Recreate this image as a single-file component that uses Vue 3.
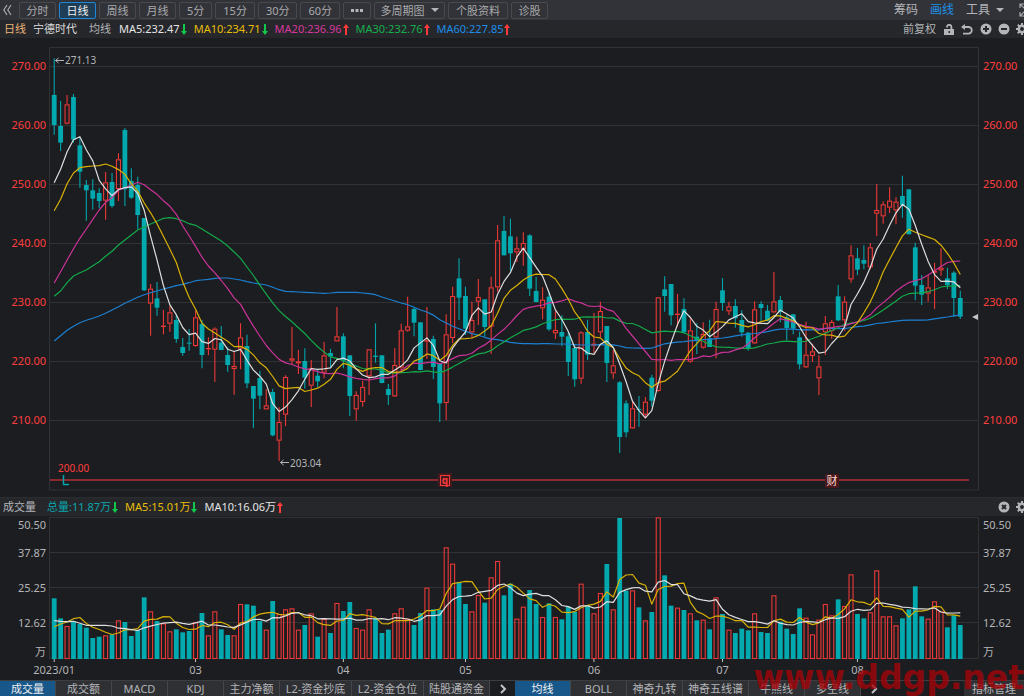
<script setup>
const periods = [
  { t: '分时' }, { t: '日线', on: true }, { t: '周线' }, { t: '月线' },
  { t: '5分', fit: true }, { t: '15分', fit: true }, { t: '30分', fit: true }, { t: '60分', fit: true },
]
const averages = [
  { t: 'MA5:232.47', c: 'white', up: false },
  { t: 'MA10:234.71', c: 'yellow', up: false },
  { t: 'MA20:236.96', c: 'magenta', up: true },
  { t: 'MA30:232.76', c: 'green', up: true },
  { t: 'MA60:227.85', c: 'blue', up: true },
]
const volumeStats = [
  { t: '总量:11.87万', c: 'teal', up: false },
  { t: 'MA5:15.01万', c: 'yellow', up: false },
  { t: 'MA10:16.06万', c: 'white', up: true },
]
const leftTabs = [
  { t: '成交量', on: true }, { t: '成交额' }, { t: 'MACD' }, { t: 'KDJ' }, { t: '主力净额' },
  { t: 'L2-资金抄底', w: 'wide' }, { t: 'L2-资金仓位', w: 'wide' }, { t: '陆股通资金', w: 'mid' },
]
const rightTabs = [
  { t: '均线', on: true }, { t: 'BOLL' }, { t: '神奇九转' }, { t: '神奇五线谱', w: 'mid' }, { t: '牛熊线' }, { t: '多空线' },
]

// Candles: direction, high, body top, body bottom, low, in thirds of a unit below each base line.
const U = 1
const D = 0
const segments = [
  { base: 135, rows: [
    [D, 40, 150, 240, 269], [D, 168, 243, 293, 318], [U, 150, 178, 236, 238], [D, 147, 156, 284, 293],
    [D, 280, 301, 380, 428], [D, 405, 420, 436, 527], [D, 403, 436, 461, 494], [D, 430, 444, 468, 490],
    [U, 381, 412, 467, 524], [D, 384, 411, 483, 488], [U, 325, 343, 432, 468], [D, 249, 255, 433, 483],
    [D, 370, 408, 458, 462], [D, 395, 420, 510, 553], [D, 519, 519, 736, 738],
  ] },
  { base: 780, rows: [
    [U, 72, 86, 131, 227], [D, 66, 115, 143, 167], [U, 150, 197, 200, 223], [U, 138, 157, 191, 215],
    [D, 165, 180, 237, 248], [D, 234, 261, 279, 287], [D, 207, 248, 251, 272], [U, 152, 172, 258, 260],
    [D, 180, 192, 285, 325], [U, 232, 264, 267, 286], [U, 202, 206, 269, 366], [D, 198, 248, 270, 270],
    [D, 262, 285, 315, 336], [U, 272, 318, 327, 404], [U, 190, 232, 266, 328], [D, 224, 258, 370, 385],
    [D, 378, 378, 416, 504], [D, 332, 354, 407, 448], [U, 388, 436, 448, 448], [D, 386, 396, 526, 529],
    [U, 442, 486, 542, 603], [U, 346, 351, 464, 498], [U, 201, 295, 302, 313], [U, 270, 304, 310, 342],
    [D, 265, 303, 353, 386], [U, 300, 325, 377, 441], [D, 327, 347, 364, 382], [U, 246, 286, 338, 355],
    [D, 267, 279, 290, 322], [U, 141, 229, 244, 244], [D, 220, 229, 302, 325], [D, 286, 286, 408, 468],
    [U, 394, 405, 448, 482], [U, 362, 381, 426, 440], [U, 268, 268, 349, 405], [D, 190, 287, 291, 308],
    [D, 286, 286, 369, 370], [D, 372, 387, 405, 435], [U, 265, 315, 409, 411], [U, 191, 211, 323, 331],
    [U, 110, 199, 212, 215], [D, 141, 147, 188, 229], [D, 187, 187, 330, 331], [U, 141, 241, 244, 297],
    [D, 227, 237, 321, 357], [D, 309, 309, 430, 486], [U, 163, 223, 429, 480], [U, 80, 108, 234, 250],
    [D, -5, 55, 113, 180],
  ] },
  { base: 600, rows: [
    [D, 260, 288, 386, 405], [U, 305, 360, 397, 415], [U, 237, 291, 305, 375], [D, 298, 298, 381, 410],
    [U, 230, 262, 380, 462], [U, 75, 121, 262, 275], [D, 47, 93, 166, 166], [D, 56, 109, 160, 212],
    [U, 110, 145, 157, 186], [U, 97, 129, 148, 197], [D, 103, 106, 266, 288], [D, 230, 273, 306, 306],
    [U, 262, 299, 325, 358], [D, 275, 290, 388, 392], [U, 334, 390, 400, 417], [D, 346, 396, 410, 439],
    [D, 395, 409, 486, 528], [D, 432, 444, 538, 560], [U, 394, 397, 536, 551], [D, 359, 396, 464, 480],
    [U, 339, 431, 437, 459], [U, 305, 333, 397, 412], [D, 378, 378, 489, 546], [U, 450, 496, 520, 536],
    [D, 543, 547, 711, 759], [D, 601, 610, 697, 712], [U, 605, 625, 685, 686], [D, 588, 627, 630, 680],
    [U, 591, 605, 644, 655], [D, 524, 533, 602, 620], [U, 292, 292, 573, 575], [D, 229, 268, 288, 335],
    [D, 252, 252, 346, 376], [U, 282, 341, 344, 380], [D, 295, 327, 397, 400], [U, 355, 391, 485, 488],
    [D, 370, 410, 420, 462], [U, 367, 402, 443, 446],
  ] },
  { base: 495, rows: [
    [D, 464, 520, 546, 546], [U, 410, 432, 517, 580], [D, 339, 376, 414, 437], [U, 410, 424, 439, 450],
    [D, 403, 423, 460, 488], [D, 436, 465, 502, 515], [D, 501, 503, 550, 557], [U, 409, 433, 535, 537],
    [D, 409, 417, 429, 467], [D, 420, 437, 467, 469], [U, 321, 409, 442, 445], [D, 393, 405, 440, 472],
    [D, 451, 457, 489, 525], [D, 447, 448, 491, 508], [D, 500, 517, 598, 613], [U, 470, 569, 607, 609],
    [U, 536, 559, 573, 591], [U, 571, 604, 640, 690], [U, 453, 475, 502, 570], [U, 465, 471, 498, 522],
    [D, 360, 394, 466, 468], [U, 394, 410, 466, 497], [U, 241, 271, 343, 353], [D, 249, 280, 314, 330],
    [D, 241, 285, 296, 313], [U, 234, 247, 307, 313], [U, 57, 135, 146, 214], [U, 109, 118, 154, 176],
    [U, 67, 107, 128, 144], [U, 97, 110, 136, 178], [D, 32, 93, 120, 158], [D, 72, 73, 208, 208],
    [D, 233, 247, 362, 406], [D, 330, 360, 389, 420], [U, 330, 367, 386, 410], [U, 293, 318, 323, 432],
    [U, 250, 308, 316, 332], [D, 308, 340, 360, 372], [D, 319, 323, 399, 455], [D, 377, 399, 455, 462],
  ] },
]
const volumeTops = [
  310, 370, 393, 378, 387, 398, 429, 425, 421, 419, 376, 381, 423, 405, 307, 349, 378, 385, 409, 403,
  412, 408, 381, 354, 421, 349, 403, 420, 421, 327, 328, 332, 378, 404, 318, 357, 343, 340, 404, 390,
  355, 425, 372, 414, 324, 348, 321, 399, 404, 343, 369, 414, 404, 355, 340, 371, 390, 354, 278, 343,
  345, 157, 206, 261, 327, 349, 300, 323, 247, 198, 301, 266, 371, 335, 285, 327, 366, 325, 366, 373,
  335, 350, 266, 331, 355, 294, 207, 343, 69, 287, 286, 337, 376, 351, 67, 241, 332, 338, 345, 355,
  376, 374, 403, 307, 357, 404, 414, 401, 406, 355, 411, 414, 301, 380, 401, 417, 340, 368, 418, 374,
  327, 361, 313, 333, 238, 357, 370, 352, 226, 364, 364, 391, 370, 343, 274, 364, 371, 319, 349, 397,
  361, 390,
]

const xOf = (i) => 54.2 + i * 6.426
const candles = segments
  .flatMap((s) => s.rows.map((r) => [r[0], ...r.slice(1).map((v) => (s.base + v) / 3)]))
  .map(([up, high, top, bottom, low], i) => ({ up, high, top, bottom, low, x: xOf(i), close: up ? top : bottom }))
const closes = candles.map((c) => c.close)
const volumes = volumeTops.map((v) => 495 + v / 3)

// The first points of each average come from days before the window, so they are given.
function averageLine(values, n, lead) {
  return values
    .map((_, i) => {
      const y = i < lead.length ? lead[i] : values.slice(i - n + 1, i + 1).reduce((a, b) => a + b, 0) / n
      return `${xOf(i).toFixed(1)},${y.toFixed(1)}`
    })
    .join(' ')
}
const priceLines = [
  { c: 'l-blue', p: averageLine(closes, 60, [
    341, 335.7, 330.3, 326.3, 322.7, 320.3, 318.3, 316, 313.3, 310, 306.7, 303.3, 300.3, 297.3, 294.7, 292.7, 291, 289, 287.3, 285.7,
    284.3, 282.7, 280.7, 280, 279.3, 278.3, 278, 278, 279, 280, 281.7, 283, 284, 285, 287.3, 289.7, 291.3, 291.7, 292, 292.3,
    292.7, 293, 293.3, 293, 292.3, 292.3, 292.3, 292.3, 293, 293.7, 294.7, 297, 299, 301, 303, 304.7, 307.3, 310, 312]) },
  { c: 'l-green', p: averageLine(closes, 30, [
    296.3, 291, 282.7, 276, 272.7, 270, 265.7, 261.7, 256.3, 251.3, 245, 240, 235, 230, 227, 224, 221.3, 218.3, 217.7, 218.7,
    220.7, 223.7, 225.3, 229, 233, 237, 241, 246, 252]) },
  { c: 'l-magenta', p: averageLine(closes, 20, [
    283, 271.7, 260, 248.7, 238.3, 229, 219.3, 210, 202.3, 197.7, 190.3, 188, 185, 182.3, 184.7, 189.7, 194.3, 200.7, 206.3]) },
  { c: 'l-yellow', p: averageLine(closes, 10, [210.7, 199.3, 183.7, 173, 167.7, 166.7, 166, 165.7, 164]) },
  { c: 'l-white', p: averageLine(closes, 5, [182.7, 169.3, 151.7, 139.7]) },
]
const volumeLines = [
  { c: 'l-yellow', p: averageLine(volumes, 5, [626.7, 624, 622, 618.7]) },
  { c: 'l-white', p: averageLine(volumes, 10, [620.7, 621.3, 621.7, 621.3, 623.3, 625.3, 625.3, 625.3, 625.3]) },
]

const priceGrid = [
  ['270.00', 66], ['260.00', 125], ['250.00', 184], ['240.00', 243], ['230.00', 302], ['220.00', 361], ['210.00', 420],
]
const volumeLabels = [['50.50', 525], ['37.87', 553], ['25.25', 588], ['12.62', 623], ['万', 652]]
const dates = [['2023/01', 0], ['03', 22], ['04', 45], ['05', 64], ['06', 84], ['07', 104], ['08', 125]]
</script>

<template>
  <main class="app">
    <nav class="toolbar">
      <button class="icon collapse" aria-label="收起">
        <svg width="10" height="12" viewBox="0 0 10 12"><path d="M4 1 .8 6 4 11M8 1 4.800 6 8 11" /></svg>
      </button>
      <button v-for="p in periods" :key="p.t" class="period" :class="{ on: p.on, fit: p.fit }">{{ p.t }}</button>
      <button class="period dots" aria-label="更多">
        <svg width="12" height="3" viewBox="0 0 12 3"><path d="M0 0h3v3H0zM4.500 0h3v3h-3zM9 0h3v3H9z" /></svg>
      </button>
      <button class="period menu" aria-haspopup="true">多周期图<i class="caret"></i></button>
      <button class="period fit">个股资料</button>
      <button class="period">诊股</button>
      <div class="tools">
        <button>筹码</button>
        <button class="active">画线</button>
        <button aria-haspopup="true">工具<i class="caret"></i></button>
        <button class="icon" aria-label="全屏">
          <svg width="5" height="14" viewBox="0 0 5 14"><path d="M1 5V1h4M1 1l5 5M1 9v4h4M1 13l5-5" /></svg>
        </button>
      </div>
    </nav>

    <header class="info">
      <span class="orange">日线</span>
      <span class="name">宁德时代</span>
      <span class="ma-label">均线</span>
      <span v-for="m in averages" :key="m.t" class="stat" :class="m.c">{{ m.t }}<svg class="arrow" :class="m.up ? 'up' : 'down'" width="6" height="11" viewBox="0 0 6 11"><path d="M3 0 6 4H4v7H2V4H0z" /></svg></span>
      <div class="actions">
        <button class="adjust">前复权</button>
        <button class="icon" aria-label="锁定">
          <svg width="11" height="11" viewBox="0 0 11 11"><path class="ln" d="M3 3.500V3a2.200 2.200 0 0 1 4.400 0v2" /><path class="fl" d="M0 5h10v6H0z" /><path class="hole" d="M4.500 7h1.500v2H4.500z" /></svg>
        </button>
        <button class="icon" aria-label="撤销">
          <svg width="13" height="11" viewBox="0 0 13 11"><path class="ln" d="M3 3h4.500a3.300 3.300 0 0 1 0 6.600H2" /><path class="fl" d="M0 3 4 0v6z" /></svg>
        </button>
        <button class="icon" aria-label="放大">
          <svg width="12" height="12" viewBox="0 0 12 12"><circle class="fl" cx="6" cy="6" r="5.500" /><path class="cut" d="M6 3v6M3 6h6" /></svg>
        </button>
        <button class="icon" aria-label="缩小">
          <svg width="12" height="12" viewBox="0 0 12 12"><circle class="fl" cx="6" cy="6" r="5.500" /><path class="cut" d="M3 6h6" /></svg>
        </button>
        <button class="icon" aria-label="设置">
          <svg width="8" height="12" viewBox="0 0 8 12"><circle class="gear" cx="6" cy="6" r="3.200" /><path class="teeth" d="M6 0v2.500M6 9.500V12M0 6h2.500M1.800 1.800l1.800 1.800M1.800 10.200l1.800-1.800" /></svg>
        </button>
      </div>
    </header>

    <svg class="chart" viewBox="0 38 1024 459" role="img" aria-label="宁德时代日线">
      <path class="frame" d="M978.500 47.500H49.500V490M49.500 490H978.500M978.500 47.500V490" />
      <g v-for="[label, y] in priceGrid" :key="label">
        <path class="grid" :d="`M50 ${y + 0.5}H978`" />
        <text class="price" x="46" :y="y + 4" text-anchor="end">{{ label }}</text>
        <text class="price" x="983" :y="y + 4">{{ label }}</text>
      </g>
      <path class="base" d="M50 480H969" />
      <g v-for="(c, i) in candles" :key="i" :class="c.up ? 'rise' : 'fall'">
        <template v-if="c.up">
          <path :d="`M${c.x} ${c.high}V${c.top}M${c.x} ${c.bottom}V${c.low}`" />
          <rect :x="c.x - 2" :y="c.top + 0.5" width="4" :height="Math.max(c.bottom - c.top - 1, 0.3)" />
        </template>
        <template v-else>
          <path :d="`M${c.x} ${c.high}V${c.low}`" />
          <rect :x="c.x - 2.4" :y="c.top" width="4.8" :height="c.bottom - c.top" />
        </template>
      </g>
      <polyline v-for="l in priceLines" :key="l.c" :class="l.c" :points="l.p" />
      <path class="pointer" d="M55.500 60.500H64M58.500 58 55.500 60.500 58.500 63M280.500 462.500H289M283.500 460 280.500 462.500 283.500 465" />
      <text class="note" x="65" y="64">271.13</text>
      <text class="note" x="290" y="467">203.04</text>
      <text class="note low" x="58" y="472">200.00</text>
      <path class="mark" d="M63.500 475V484.500H69" />
      <path class="last" d="M978 314V320L972 317z" />
      <g class="event">
        <rect class="halo" x="438" y="473" width="14" height="14" />
        <rect class="box" x="440.500" y="475.500" width="9" height="10" />
        <text x="445" y="484" text-anchor="middle">q</text>
      </g>
      <g class="event report">
        <rect class="halo" x="825" y="474" width="14" height="14" />
        <text x="832" y="485" text-anchor="middle">财</text>
      </g>
    </svg>

    <header class="info volume-head">
      <span class="ma-label">成交量</span>
      <span v-for="m in volumeStats" :key="m.t" class="stat" :class="m.c">{{ m.t }}<svg class="arrow" :class="m.up ? 'up' : 'down'" width="6" height="11" viewBox="0 0 6 11"><path d="M3 0 6 4H4v7H2V4H0z" /></svg></span>
      <div class="actions">
        <button class="icon" aria-label="关闭">
          <svg width="12" height="12" viewBox="0 0 12 12"><circle class="fl" cx="6" cy="6" r="5.500" /><path class="cut" d="M4 4l4 4M8 4l-4 4" /></svg>
        </button>
        <button class="icon" aria-label="设置">
          <svg width="8" height="12" viewBox="0 0 8 12"><circle class="gear" cx="6" cy="6" r="3.200" /><path class="teeth" d="M6 0v2.500M6 9.500V12M0 6h2.500M1.800 1.800l1.800 1.800M1.800 10.200l1.800-1.800" /></svg>
        </button>
      </div>
    </header>

    <svg class="chart" viewBox="0 516 1024 164" role="img" aria-label="成交量">
      <path class="frame" d="M49.500 658.500V517.500H978.500V658.500z" />
      <path class="grid" d="M50 552.500H978M50 587.500H978M50 622.500H978" />
      <g v-for="[label, y] in volumeLabels" :key="label">
        <text class="amount" x="46" :y="y + 4" text-anchor="end">{{ label }}</text>
        <text class="amount" x="983" :y="y + 4">{{ label }}</text>
      </g>
      <g v-for="(y, i) in volumes" :key="i" :class="candles[i].up ? 'rise' : 'fall'">
        <rect v-if="candles[i].up" :x="xOf(i) - 2" :y="y + 0.5" width="4" :height="658 - y" />
        <rect v-else :x="xOf(i) - 2.4" :y="y" width="4.8" :height="659 - y" />
      </g>
      <polyline v-for="l in volumeLines" :key="l.c" :class="l.c" :points="l.p" />
      <g v-for="[label, i] in dates" :key="label">
        <path class="tick" :d="`M${xOf(i)} 659V662`" />
        <text class="amount" :x="xOf(i)" y="674" text-anchor="middle">{{ label }}</text>
      </g>
    </svg>

    <footer class="tabs">
      <button v-for="t in leftTabs" :key="t.t" class="tab" :class="[t.w, { on: t.on }]">{{ t.t }}</button>
      <button class="icon next" aria-label="更多指标"><svg width="8" height="10" viewBox="0 0 8 10"><path d="M2 1l4 4-4 4" /></svg></button>
      <button v-for="t in rightTabs" :key="t.t" class="tab" :class="[t.w, { on: t.on }]">{{ t.t }}</button>
      <button class="icon next" aria-label="更多均线"><svg width="8" height="10" viewBox="0 0 8 10"><path d="M2 1l4 4-4 4" /></svg></button>
      <button class="tab manage">指标管理</button>
    </footer>
    <div class="watermark">www.ddgp.net</div>
  </main>
</template>

<style>
body { background: #1c1d20; }
</style>

<style scoped>
.app {
  position: relative;
  overflow: hidden;
  background: #1c1d20;
  color: #b4b5b8;
  font: 11px/16px "Noto Sans", "Noto Sans CJK SC", sans-serif;
}
button { font: inherit; color: inherit; background: none; border: 0; padding: 0; margin: 0; white-space: nowrap; }
svg { display: block; flex: none; }

.toolbar { display: flex; align-items: center; gap: 3px; height: 20px; background: #323338; }
.period {
  width: 37px; height: 17px; box-sizing: border-box; flex: none;
  display: flex; align-items: center; justify-content: center;
  border: 1px solid #48494d; border-radius: 2px; line-height: 15px; color: #a9aaad;
}
.period.fit { width: auto; padding: 0 7px; }
.period.dots { width: 28px; }
.period.menu { width: 71px; gap: 6px; }
.period.on { background: #1f3d54; border-color: #1e86d4; color: #f0f0f0; }
.dots svg { fill: #b4b5b8; }
.collapse { width: 16px; display: flex; justify-content: center; }
.collapse svg, .tools svg { fill: none; stroke: #a9aaad; stroke-width: 1.200; }
.caret { border: 4px solid transparent; border-top-color: #b4b5b8; border-bottom: 0; }
.tools { display: flex; align-items: center; margin-left: auto; font-size: 12px; }
.tools button { display: flex; align-items: center; gap: 6px; margin-right: 12px; }
.tools button:nth-child(3) { margin-right: 15px; }
.tools .icon { margin-right: 0; }
.tools .active { color: #1e90e8; }

.info { display: flex; align-items: center; height: 18px; padding-left: 4px; background: #25272b; }
.volume-head { height: 19px; padding-left: 3px; border-top: 1px solid #2b2d31; box-sizing: border-box; }
.name { margin: 0 12px 0 7px; color: #dcdcdc; }
.ma-label { margin-right: 8px; }
.volume-head .ma-label { margin-right: 11px; }
.stat { display: flex; align-items: center; gap: 1px; margin-right: 7px; white-space: nowrap; }
.arrow.up { fill: #ff3b3b; }
.arrow.down { fill: #12c84a; transform: rotate(180deg); }
.orange { color: #eab377; }
.white { color: #e4e4e4; }
.yellow { color: #e8be08; }
.magenta { color: #d9379f; }
.green { color: #15b04b; }
.blue { color: #1e8ee8; }
.teal { color: #0aa5ad; }
.actions { display: flex; align-items: center; gap: 6px; margin-left: auto; }
.adjust { margin-right: 2px; }
.actions .fl { fill: #b4b5b8; }
.actions .ln, .gear { fill: none; stroke: #b4b5b8; stroke-width: 1.800; }
.gear { stroke-width: 2.500; }
.teeth { stroke: #b4b5b8; stroke-width: 2; }
.actions .hole { fill: #25272b; }
.cut { stroke: #25272b; stroke-width: 2; }

.chart { width: 100%; height: auto; }
.chart text { font-size: 11px; }
.frame, .grid { fill: none; stroke: #303236; stroke-width: 1; }
.price { fill: #ff3e3e; }
.amount { fill: #b4b5b8; }
.chart .note { font-size: 10px; fill: #b4b5b8; }
.chart .low { fill: #ff3e3e; }
.base { stroke: #b02f33; stroke-width: 1.500; }
.rise path, .rise rect { fill: none; stroke: #ea3838; stroke-width: 1.100; }
.fall path { stroke: #02a5ab; stroke-width: 1.100; }
.fall rect { fill: #02a9af; }
polyline { fill: none; stroke-width: 1.200; stroke-linejoin: round; }
.l-white { stroke: #dedede; }
.l-yellow { stroke: #d9b106; }
.l-magenta { stroke: #cc3399; }
.l-green { stroke: #13a94a; }
.l-blue { stroke: #1c80d2; }
.pointer { fill: none; stroke: #b4b5b8; stroke-width: 1; }
.mark { fill: none; stroke: #02a5ab; stroke-width: 1.500; }
.last { fill: #c4c4c4; }
.tick { stroke: #c4c4c4; stroke-width: 1; }
.halo { fill: #48191c; }
.box { fill: none; stroke: #f23c3c; stroke-width: 1; }
.chart .event text { font-size: 10px; font-weight: 700; fill: #f23c3c; }
.chart .report text { font-size: 11px; font-weight: 400; fill: #ffd6d0; }

.tabs { display: flex; height: 16px; box-sizing: border-box; border-top: 1px solid #3c3e42; }
.tab {
  width: 56px; flex: none; box-sizing: border-box; line-height: 15px;
  background: #2f3034; border-right: 1px solid #45464a;
}
.tab.wide { width: 72px; }
.tab.mid { width: 66px; }
.tab.on { background: #18578a; color: #f0f0f0; }
.next { width: 25px; flex: none; display: flex; align-items: center; justify-content: center; }
.next svg { fill: none; stroke: #c4c4c4; stroke-width: 2; }
.next + .manage { margin-left: auto; }
.manage { width: 60px; border-right: 0; }
.watermark {
  position: absolute; right: 0; bottom: -2px;
  font: 700 33px/40px "DejaVu Sans", sans-serif; color: rgba(165, 4, 8, 0.8);
  pointer-events: none;
}
</style>
